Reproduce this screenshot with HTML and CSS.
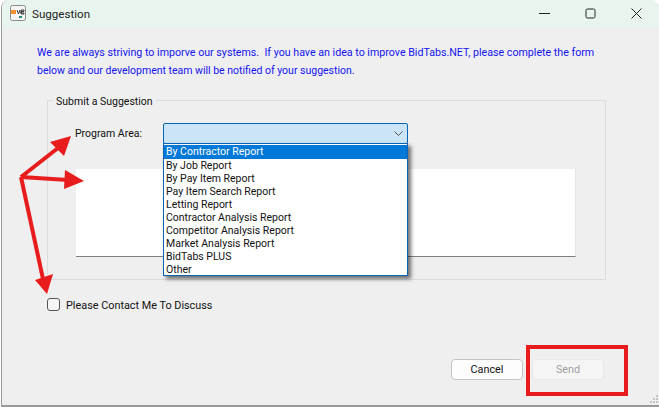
FILE: index.html
```html
<!DOCTYPE html>
<html lang="en">
<head>
<meta charset="utf-8">
<title>Suggestion</title>
<link rel="stylesheet" href="styles.css">
</head>
<body>
<div class="window">
  <header class="titlebar">
    <svg class="app-icon" width="16" height="16" viewBox="0 0 16 16">
      <rect x="0.5" y="0.5" width="15" height="15" rx="2" fill="#f4f4f4" stroke="#8a8a8a"/>
      <rect x="1" y="5" width="5" height="4" fill="#f0902a"/>
      <rect x="6" y="4" width="9" height="6" fill="#fff"/>
      <path d="M7 5l1.5 4L10 5M11 5h3v1.500h-3v1.500h3v1h-3z" fill="none" stroke="#333" stroke-width="1"/>
      <rect x="9" y="11" width="3" height="2" fill="#2a8a80"/>
    </svg>
    <span class="title">Suggestion</span>
    <div class="controls">
      <svg width="11" height="11" viewBox="0 0 11 11"><path d="M0 5.500h11" stroke="#222" fill="none"/></svg>
      <svg width="11" height="11" viewBox="0 0 11 11"><rect x="1" y="1" width="9" height="9" rx="1.500" stroke="#222" fill="none"/></svg>
      <svg width="11" height="11" viewBox="0 0 11 11"><path d="M.5.500l10 10M10.500.500l-10 10" stroke="#222" fill="none"/></svg>
    </div>
  </header>
  <p class="intro"><span class="intro-first">We are always striving to imporve our systems.&nbsp; If you have an idea to improve BidTabs.NET, please complete the form</span><br>below and our development team will be notified of your suggestion.</p>
  <fieldset class="group">
    <legend class="legend">Submit a Suggestion</legend>
    <div class="area-row">
      <label class="area-label">Program Area:</label>
      <div class="combo">
        <svg width="9" height="5" viewBox="0 0 9 5"><path d="M.5.500l4 4 4-4" stroke="#555" fill="none"/></svg>
        <ul class="list">
          <li class="item selected">By Contractor Report</li>
          <li class="item">By Job Report</li>
          <li class="item">By Pay Item Report</li>
          <li class="item">Pay Item Search Report</li>
          <li class="item">Letting Report</li>
          <li class="item">Contractor Analysis Report</li>
          <li class="item">Competitor Analysis Report</li>
          <li class="item">Market Analysis Report</li>
          <li class="item">BidTabs PLUS</li>
          <li class="item">Other</li>
        </ul>
      </div>
    </div>
    <div class="textbox"></div>
  </fieldset>
  <label class="contact"><span class="check"></span>Please Contact Me To Discuss</label>
  <div class="buttons">
    <button class="btn">Cancel</button>
    <button class="btn disabled" disabled>Send</button>
  </div>
  <svg class="grip" width="10" height="10" viewBox="0 0 10 10"><path d="M7 1h2v2H7zM4 4h2v2H4zM7 4h2v2H7zM1 7h2v2H1zM4 7h2v2H4zM7 7h2v2H7z" fill="#c4c4c4"/></svg>
</div>
<svg class="annotations" width="659" height="407" viewBox="0 0 659 407">
  <g fill="none" stroke="#e81c1c" stroke-width="4">
    <path d="M21 177L58 148"/>
    <path d="M21 177L68 180"/>
    <path d="M21 177L43 279"/>
  </g>
  <g fill="#e81c1c">
    <path d="M71 136L50 142L64 156z"/>
    <path d="M84 181L65 170L64 189z"/>
    <path d="M47 294L35 280L53 274z"/>
  </g>
</svg>
<div class="highlight"></div>
</body>
</html>
```
FILE: styles.css
```css
* { box-sizing: border-box; }
html, body { margin: 0; padding: 0; }
body {
  position: relative;
  width: 659px;
  height: 407px;
  overflow: hidden;
  background: #fff;
  font-family: Roboto, "Noto Sans", sans-serif;
  font-size: 10.5px;
  color: #111;
}
.window {
  position: relative;
  width: 658px;
  height: 407px;
  margin-left: 1px;
  background: #efefef;
  border-left: 1px solid #9a9a9a;
  border-bottom: 2px solid #9a9a9a;
  border-top-left-radius: 8px;
  border-top-right-radius: 8px;
  overflow: hidden;
}
.titlebar {
  display: flex;
  align-items: center;
  height: 28px;
  padding: 0 0 2px 8px;
  background: #e8f5ee;
}
.app-icon { margin-right: 6px; }
.title { padding-top: 2px; font-size: 11.6px; color: #222; }
.controls {
  display: flex;
  gap: 35px;
  margin-left: auto;
  margin-right: 17px;
}
.intro {
  margin: 16px 0 0 35px;
  color: #1414f0;
  line-height: 18px;
  white-space: nowrap;
}
.intro-first { font-size: 10.67px; }
.group {
  width: 559px;
  height: 187px;
  margin: 13px 0 0 45px;
  padding: 0;
  border: 1px solid #dcdcdc;
}
.legend { margin-left: 5px; padding: 2px 3px 0; line-height: 13px; }
.area-row {
  display: flex;
  align-items: center;
  margin-top: 15px;
  height: 21px;
}
.area-label { margin-left: 27px; width: 88px; }
.combo {
  position: relative;
  display: flex;
  align-items: center;
  justify-content: flex-end;
  width: 245px;
  height: 21px;
  padding-right: 4px;
  background: #cce4f7;
  border: 1px solid #0a64b4;
  border-radius: 2px;
}
.list {
  position: absolute;
  left: -1px;
  top: 19px;
  z-index: 2;
  width: 245px;
  height: 133px;
  margin: 0;
  padding: 1px 0 0;
  list-style: none;
  background: #fff;
  border: 1px solid #0a64b4;
  box-shadow: 3px 3px 4px rgba(0, 0, 0, 0.55);
}
.item { height: 13px; line-height: 13px; padding-left: 2px; }
.selected { height: 14px; background: #0078d7; color: #fff; }
.textbox {
  width: 500px;
  height: 88px;
  margin: 25px 0 0 28px;
  background: #fff;
  border-right: 1px solid #e4e4e4;
  border-bottom: 1px solid #808080;
}
.contact {
  display: flex;
  align-items: center;
  margin: 17px 0 0 45px;
  padding-top: 1px;
  height: 15px;
  font-size: 10.85px;
}
.check {
  width: 13px;
  height: 13px;
  margin: -2px 6px 0 0;
  background: #f6f6f6;
  border: 1px solid #555;
  border-radius: 3px;
}
.buttons {
  display: flex;
  gap: 9px;
  margin: 47px 0 0 449px;
}
.btn {
  width: 72px;
  height: 21px;
  padding: 0;
  font: inherit;
  font-size: 10.8px;
  color: #111;
  background: #fdfdfd;
  border: 1px solid #c4c4c4;
  border-radius: 4px;
}
.disabled {
  color: #a0a0a0;
  background: #f5f5f5;
  border-color: #e8e8e8;
}
.grip { position: absolute; right: 0; bottom: 1px; }
.annotations { position: absolute; left: 0; top: 0; z-index: 3; pointer-events: none; }
.highlight {
  position: absolute;
  left: 526px;
  top: 345px;
  width: 102px;
  height: 51px;
  z-index: 3;
  border: 4px solid #e81c1c;
}
```
